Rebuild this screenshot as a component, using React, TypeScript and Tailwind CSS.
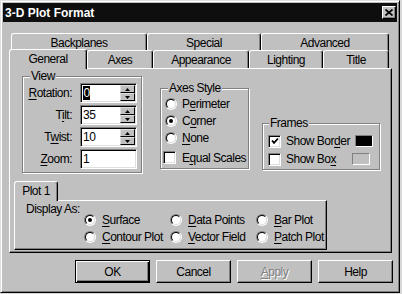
import React from "react";

function U({ children }: { children: React.ReactNode }) {
  return <span className="underline decoration-1 underline-offset-[2px]">{children}</span>;
}

function Radio({ checked }: { checked?: boolean }) {
  return (
    <span className="w-[12px] h-[12px] shrink-0 rounded-full border border-t-[#808080] border-l-[#808080] border-r-white border-b-white">
      <span className="w-full h-full rounded-full bg-white border border-t-black border-l-black border-r-[#dfdfdf] border-b-[#dfdfdf] flex items-center justify-center">
        {checked && <span className="w-[4px] h-[4px] rounded-full bg-black" />}
      </span>
    </span>
  );
}

function Check({ checked }: { checked?: boolean }) {
  return (
    <span className="w-[13px] h-[13px] shrink-0 bg-white border border-t-[#808080] border-l-[#808080] border-r-white border-b-white shadow-[inset_1px_1px_0_#000,inset_-1px_-1px_0_#dfdfdf] flex items-center justify-center">
      {checked && (
        <svg width="8" height="8" viewBox="0 0 8 8">
          <polyline points="1,3.5 3,5.8 7,1.5" fill="none" stroke="#000" strokeWidth="1.8" />
        </svg>
      )}
    </span>
  );
}

function Spinner() {
  return (
    <div className="flex flex-col w-[15px] h-[16px] mr-[1px] shrink-0">
      <div className="h-[8px] bg-[#c0c0c0] border border-t-[#dfdfdf] border-l-[#dfdfdf] border-r-black border-b-black flex items-center justify-center">
        <svg width="5" height="3" viewBox="0 0 5 3">
          <path d="M2.5 0L5 3H0z" fill="#000" />
        </svg>
      </div>
      <div className="h-[8px] bg-[#c0c0c0] border border-t-[#dfdfdf] border-l-[#dfdfdf] border-r-black border-b-black flex items-center justify-center">
        <svg width="5" height="3" viewBox="0 0 5 3">
          <path d="M0 0h5L2.5 3z" fill="#000" />
        </svg>
      </div>
    </div>
  );
}

function Field({ value, spin, selected }: { value: string; spin?: boolean; selected?: boolean }) {
  return (
    <div className="w-[57px] h-[20px] bg-white flex items-center border border-t-[#808080] border-l-[#808080] border-r-white border-b-white shadow-[inset_1px_1px_0_#000,inset_-1px_-1px_0_#dfdfdf]">
      <span className="flex-1 pl-[2px] flex items-center">
        {selected ? (
          <span className="inline-block h-[14px] leading-[14px] bg-black text-white px-[0.5px]">{value}</span>
        ) : (
          value
        )}
      </span>
      {spin && <Spinner />}
    </div>
  );
}

function Group({ label, className, labelClass, children }: { label: React.ReactNode; className: string; labelClass: string; children: React.ReactNode }) {
  return (
    <div className={`relative shrink-0 border border-[#808080] shadow-[inset_1px_1px_0_#fff,1px_1px_0_#fff] ${className}`}>
      <span className={`absolute top-[-8px] bg-[#c0c0c0] px-[1px] leading-[14px] ${labelClass}`}>{label}</span>
      {children}
    </div>
  );
}

function BackTab({ className, children }: { className: string; children: React.ReactNode }) {
  return (
    <div className={`h-[18px] pt-[1px] flex items-center justify-center bg-[#c0c0c0] border-t border-l border-r border-t-white border-l-white border-r-black rounded-t-[3px] shadow-[inset_-1px_0_0_#808080] ${className}`}>
      {children}
    </div>
  );
}

function Btn({ children, isDefault, disabled }: { children: React.ReactNode; isDefault?: boolean; disabled?: boolean }) {
  const frame = isDefault
    ? "border border-black shadow-[inset_1px_1px_0_#fff,inset_-1px_-1px_0_#000,inset_-2px_-2px_0_#808080]"
    : "border border-t-white border-l-white border-r-black border-b-black shadow-[inset_-1px_-1px_0_#808080]";
  return (
    <div className={`w-[75px] h-[23px] bg-[#c0c0c0] flex items-center justify-center ${frame}`}>
      <span className={disabled ? "text-[#808080] [text-shadow:1px_1px_0_#fff]" : "text-black"}>{children}</span>
    </div>
  );
}

export default function App() {
  return (
    <div className="w-[402px] h-[294px] bg-[#d8d8d8] overflow-hidden font-['Liberation_Sans',Arial,sans-serif] text-[12px] tracking-[-0.5px] whitespace-nowrap text-black leading-none">
      <div className="w-[400px] h-[293px] bg-[#c0c0c0] p-[2px] border border-t-[#dfdfdf] border-l-[#dfdfdf] border-r-black border-b-black shadow-[inset_1px_1px_0_#fff,inset_-1px_-1px_0_#808080] flex flex-col">
        {/* Title bar */}
        <div className="h-[19px] shrink-0 bg-[#0e0e0e] flex items-center justify-between pl-[2px] pr-[1px]">
          <span className="font-bold text-[12px] tracking-normal text-white leading-none">3-D Plot Format</span>
          <div className="w-[14px] h-[13px] bg-[#c0c0c0] border border-t-white border-l-white border-r-black border-b-black shadow-[inset_-1px_-1px_0_#808080] flex items-center justify-center">
            <svg width="8" height="7" viewBox="0 0 8 7">
              <path d="M0.5 0.5L7.5 6.5M7.5 0.5L0.5 6.5" stroke="#000" strokeWidth="1.7" />
            </svg>
          </div>
        </div>

        {/* Tabs + panel */}
        <div className="ml-[6px] mt-[11px] w-[383px] flex flex-col">
          <div className="flex ml-[2px] -mb-[2px]">
            <BackTab className="w-[136px]">Backplanes</BackTab>
            <BackTab className="w-[114px]">Special</BackTab>
            <BackTab className="w-[128px]">Advanced</BackTab>
          </div>
          <div className="flex items-end h-[19px] relative z-10">
            <div className="w-[78px] h-[20px] -mb-[1px] pb-[2px] flex items-center justify-center bg-[#c0c0c0] border-t border-l border-r border-t-white border-l-white border-r-black rounded-t-[3px] shadow-[inset_-1px_0_0_#808080]">
              General
            </div>
            <BackTab className="w-[66px] h-[17px]">Axes</BackTab>
            <BackTab className="w-[96px] h-[17px]">Appearance</BackTab>
            <BackTab className="w-[74px] h-[17px]">Lighting</BackTab>
            <BackTab className="w-[66px] h-[17px]">Title</BackTab>
          </div>

          <div className="h-[185px] border border-t-white border-l-white border-r-black border-b-black shadow-[inset_-1px_-1px_0_#808080] flex flex-col">
            {/* Top row of groups */}
            <div className="flex items-start pl-[12px] pt-[7px]">
              <Group label="View" className="w-[120px] h-[97px]" labelClass="left-[7px]">
                <div className="grid grid-cols-[49px_57px] gap-x-[8px] gap-y-[2px] pt-[6px] items-center">
                  <span className="text-right">
                    <U>R</U>otation:
                  </span>
                  <Field value="0" spin selected />
                  <span className="text-right">
                    T<U>i</U>lt:
                  </span>
                  <Field value="35" spin />
                  <span className="text-right">
                    T<U>w</U>ist:
                  </span>
                  <Field value="10" spin />
                  <span className="text-right">
                    <U>Z</U>oom:
                  </span>
                  <Field value="1" />
                </div>
              </Group>

              <Group label="Axes Style" className="ml-[18px] mt-[12px] w-[89px] h-[81px]" labelClass="left-[7px]">
                <div className="flex flex-col pt-[6px]">
                  <div className="h-[17px] flex items-center gap-[5px] pl-[4px]">
                    <Radio />
                    <span>
                      P<U>e</U>rimeter
                    </span>
                  </div>
                  <div className="h-[17px] flex items-center gap-[5px] pl-[4px]">
                    <Radio checked />
                    <span>
                      C<U>o</U>rner
                    </span>
                  </div>
                  <div className="h-[17px] flex items-center gap-[5px] pl-[4px]">
                    <Radio />
                    <span>
                      <U>N</U>one
                    </span>
                  </div>
                  <div className="h-[17px] mt-[3px] flex items-center gap-[6px] pl-[2px]">
                    <Check />
                    <span>
                      E<U>q</U>ual Scales
                    </span>
                  </div>
                </div>
              </Group>

              <Group label="Frames" className="ml-[13px] mt-[47px] w-[118px] h-[47px]" labelClass="left-[6px]">
                <div className="flex flex-col pt-[8px] pl-[5px] pr-[9px]">
                  <div className="h-[18px] flex items-center gap-[5px]">
                    <Check checked />
                    <span>
                      Show Bor<U>d</U>er
                    </span>
                    <span className="ml-auto shrink-0 w-[18px] h-[12px] bg-black border border-t-[#808080] border-l-[#808080] border-r-white border-b-white" />
                  </div>
                  <div className="h-[18px] flex items-center gap-[5px]">
                    <Check />
                    <span>
                      Show Bo<U>x</U>
                    </span>
                    <span className="ml-auto shrink-0 w-[18px] h-[12px] bg-[#c0c0c0] border border-t-[#808080] border-l-[#808080] border-r-white border-b-white" />
                  </div>
                </div>
              </Group>
            </div>

            {/* Plot 1 tab area */}
            <div className="ml-[4px] mt-[8px] flex flex-col">
              <div className="relative z-10 w-[44px] h-[20px] -mb-[1px] pb-[1px] flex items-center justify-center bg-[#c0c0c0] border-t border-l border-r border-t-white border-l-white border-r-black rounded-t-[3px] shadow-[inset_-1px_0_0_#808080]">
                Plot 1
              </div>
              <div className="w-[313px] h-[50px] border border-t-white border-l-white border-r-black border-b-black shadow-[inset_-1px_-1px_0_#808080] flex flex-col pl-[11px] pt-[1px]">
                <span className="h-[14px] leading-[14px]">Display As:</span>
                <div className="-mt-[5px] ml-[58px] grid grid-cols-[86px_86px_86px] auto-rows-[17px]">
                  <div className="flex items-center gap-[6px]">
                    <Radio checked />
                    <span>
                      <U>S</U>urface
                    </span>
                  </div>
                  <div className="flex items-center gap-[6px]">
                    <Radio />
                    <span>
                      <U>D</U>ata Points
                    </span>
                  </div>
                  <div className="flex items-center gap-[6px]">
                    <Radio />
                    <span>
                      <U>B</U>ar Plot
                    </span>
                  </div>
                  <div className="flex items-center gap-[6px]">
                    <Radio />
                    <span>
                      <U>C</U>ontour Plot
                    </span>
                  </div>
                  <div className="flex items-center gap-[6px]">
                    <Radio />
                    <span>
                      <U>V</U>ector Field
                    </span>
                  </div>
                  <div className="flex items-center gap-[6px]">
                    <Radio />
                    <span>
                      <U>P</U>atch Plot
                    </span>
                  </div>
                </div>
              </div>
            </div>
          </div>
        </div>

        {/* Buttons */}
        <div className="flex justify-end gap-[6px] mt-[7px] pr-[4px]">
          <Btn isDefault>OK</Btn>
          <Btn>Cancel</Btn>
          <Btn disabled>
            <U>A</U>pply
          </Btn>
          <Btn>Help</Btn>
        </div>
      </div>
    </div>
  );
}
